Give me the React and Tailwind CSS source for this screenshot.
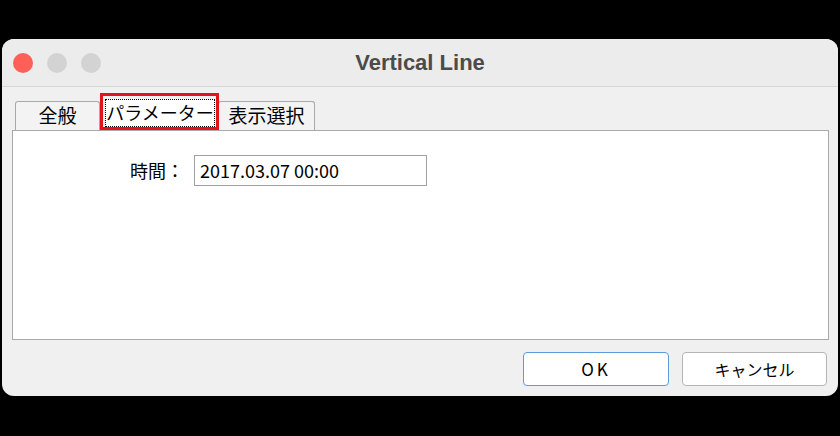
export default function App() {
  const jp = { fontFamily: '"Noto Sans CJK JP", "Liberation Sans", sans-serif' }

  return (
    <div className="h-[436px] w-[840px] overflow-hidden bg-black pt-[39px] pl-[2px]">
      <div className="flex h-[357px] w-[836px] flex-col overflow-hidden rounded-[12px] bg-[#f0f0f0]">
        {/* title bar */}
        <div className="relative flex h-[48px] shrink-0 items-center border-b border-[#d6d6d6] bg-[#ececec] pl-[11px]">
          <div className="flex items-center gap-[14px]">
            <span className="h-[20px] w-[20px] rounded-full bg-[#fe5f57]" />
            <span className="h-[20px] w-[20px] rounded-full bg-[#d3d3d3]" />
            <span className="h-[20px] w-[20px] rounded-full bg-[#d3d3d3]" />
          </div>
          <div
            className="absolute inset-x-0 top-[7px] text-center text-[22px] font-bold text-[#4b4b4b]"
            style={{ fontFamily: '"Liberation Sans", Arial, sans-serif' }}
          >
            Vertical Line
          </div>
        </div>

        {/* tabs */}
        <div className="flex h-[43px] items-end pl-[13px]" style={jp}>
          <div className="flex h-[29px] w-[85px] items-center justify-center rounded-t-[3px] border border-b-0 border-[#a9a9a9] bg-[#f3f3f3] pb-[3px] text-[19px] leading-none text-black">
            全般
          </div>
          <div className="relative ml-[3px] h-[33px] w-[114px]">
            <div className="absolute inset-x-[2px] top-[2px] bottom-[3px] flex items-center justify-center border border-dotted border-black bg-white pb-[2px] text-[18px] leading-none text-black">
              パラメーター
            </div>
            <div className="absolute -left-[3px] -right-[2px] -top-[4px] bottom-0 border-[3px] border-[#e0141b]" />
          </div>
          <div className="ml-[1px] flex h-[29px] w-[97px] items-center justify-center rounded-t-[3px] border border-b-0 border-[#a9a9a9] bg-[#f3f3f3] pb-[3px] text-[19px] leading-none text-black">
            表示選択
          </div>
        </div>

        {/* panel */}
        <div className="ml-[10px] h-[210px] w-[817px] border border-[#a9a9a9] bg-white pt-[24px]" style={jp}>
          <div className="flex items-center">
            <div className="ml-[117px] w-[64px] pb-[2px] text-[18px] leading-none text-black">時間：</div>
            <div className="flex h-[31px] w-[233px] items-center border border-[#a0a0a0] bg-white pb-[1px] pl-[5px] text-[18px] leading-none text-black">
              2017.03.07 00:00
            </div>
          </div>
        </div>

        {/* buttons */}
        <div className="mt-[12px] flex justify-end gap-[13px] pr-[11px]" style={jp}>
          <button className="flex h-[34px] w-[146px] items-center justify-center rounded-[4px] border border-[#5b9be0] bg-white text-[17px] tracking-[3px] text-black">
            OK
          </button>
          <button className="flex h-[34px] w-[145px] items-center justify-center rounded-[4px] border border-[#b5b5b5] bg-white text-[16px] text-black">
            キャンセル
          </button>
        </div>
      </div>
    </div>
  )
}
